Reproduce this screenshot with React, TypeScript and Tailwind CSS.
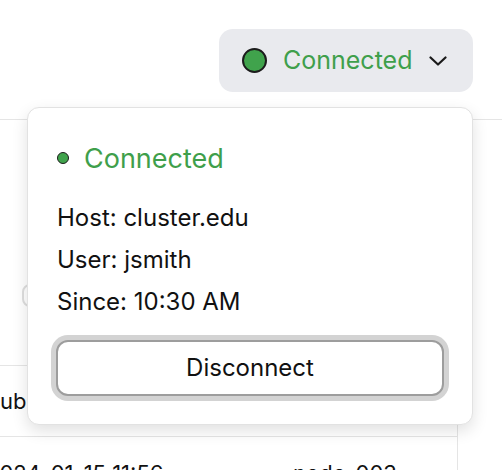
import React from "react";

const green = "text-[#3f9f4b]";

function StatusDot({ size }: { size: "lg" | "sm" }) {
  return size === "lg" ? (
    <span className="block h-[25px] w-[25px] shrink-0 rounded-full border-2 border-[#1c1c1c] bg-[#40a34c]" />
  ) : (
    <span className="block h-[12px] w-[12px] shrink-0 rounded-full border border-[#1c1c1c] bg-[#40a34c]" />
  );
}

function ConnectionMenu() {
  return (
    <div className="relative">
      <button className="flex h-[63px] w-[254px] items-center rounded-[14px] bg-[#e9eaee] pl-[23px] pr-[26px]">
        <StatusDot size="lg" />
        <span className={`ml-[16px] text-[25px] leading-none ${green}`}>Connected</span>
        <svg className="ml-auto" width="18" height="10" viewBox="0 0 18 10" fill="none">
          <polyline points="1.5,1.5 9,8.5 16.5,1.5" stroke="#1a1a1a" strokeWidth="2.2" strokeLinecap="round" strokeLinejoin="round" />
        </svg>
      </button>

      {/* dropdown panel */}
      <div className="absolute right-0 top-[78px] z-10 w-[446px] rounded-[12px] border border-[#e2e2e2] bg-white p-[28px] shadow-[0_6px_16px_rgba(0,0,0,0.12)]">
        <div className="flex h-[44px] items-center">
          <span className="ml-[1px]">
            <StatusDot size="sm" />
          </span>
          <span className={`ml-[15px] text-[27px] leading-none ${green}`}>Connected</span>
        </div>
        <div className="mt-[17px] pl-[1px] text-[24px] leading-[42px] text-[#111]">
          <p>Host: cluster.edu</p>
          <p>User: jsmith</p>
          <p>Since: 10:30 AM</p>
        </div>
        <button className="mt-[17px] flex h-[56px] w-full items-center justify-center rounded-[12px] border-2 border-[#9d9d9d] bg-white text-[24px] text-[#111] ring-[5px] ring-[#d3d3d3]">
          Disconnect
        </button>
      </div>
    </div>
  );
}

export default function App() {
  return (
    <div className="h-[470px] w-[502px] overflow-hidden bg-white font-['Inter',sans-serif] text-[#111]">
      <header className="flex h-[120px] items-start justify-end border-b border-[#e5e5e5] pr-[29px] pt-[29px]">
        <ConnectionMenu />
      </header>

      <main>
        {/* filters */}
        <div className="mt-[164px] flex items-center gap-3 pl-[22px]">
          <div className="h-[23px] w-[120px] rounded-[8px] border-2 border-[#dedede]" />
        </div>

        {/* jobs table */}
        <div className="ml-[-27px] mt-[58px] w-[485px] border-r border-t border-[#e5e5e5]">
          <div className="flex h-[71px] items-center border-b border-[#e5e5e5] px-[13px] text-[22px]">
            <span className="w-[307px]">Submitted</span>
            <span>Node</span>
          </div>
          <div className="flex h-[72px] items-center px-[13px] text-[22px]">
            <span className="w-[307px]">2024-01-15 11:56</span>
            <span>node-003</span>
          </div>
        </div>
      </main>
    </div>
  );
}
